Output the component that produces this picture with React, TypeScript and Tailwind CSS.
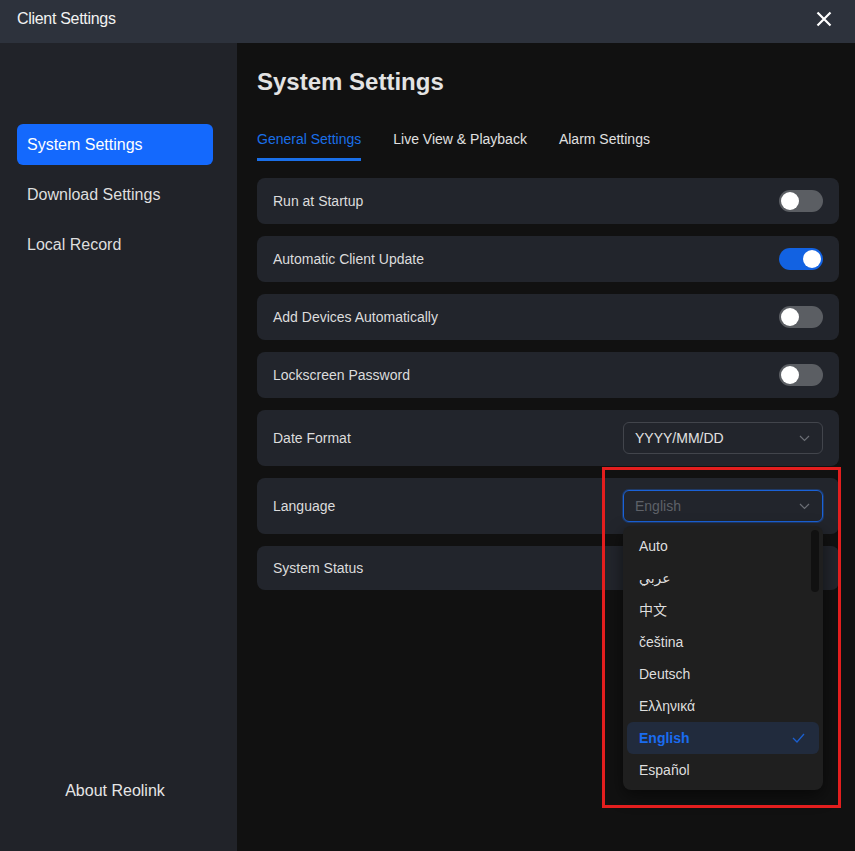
import { useState } from "react"

const font = { fontFamily: '"Liberation Sans", Arial, "Noto Sans CJK SC", "DejaVu Sans", sans-serif' }

function Toggle({ on }: { on: boolean }) {
  return (
    <div
      className={`w-[44px] h-[22px] rounded-full p-[2px] flex items-center ${
        on ? "bg-[#1262e2] justify-end" : "bg-[#5b5e63] justify-start"
      }`}
    >
      <div className="w-[18px] h-[18px] rounded-full bg-white" />
    </div>
  )
}

function Chevron() {
  return (
    <svg width="11" height="7" viewBox="0 0 11 7" fill="none">
      <path d="M1 1l4.5 4.5L10 1" stroke="#6b6e75" strokeWidth="1.2" />
    </svg>
  )
}

const languages = ["Auto", "عربي", "中文", "čeština", "Deutsch", "Ελληνικά", "English", "Español"]

export default function App() {
  const [toggles] = useState([
    { label: "Run at Startup", on: false },
    { label: "Automatic Client Update", on: true },
    { label: "Add Devices Automatically", on: false },
    { label: "Lockscreen Password", on: false },
  ])

  return (
    <div className="w-[855px] h-[851px] flex flex-col bg-[#111111] relative overflow-hidden" style={font}>
      {/* Header */}
      <div className="h-[43px] shrink-0 bg-[#2d323c] flex items-center justify-between pl-[17px] pr-[23px] pb-[5px]">
        <span className="text-[16px] text-[#f2f2f2] tracking-[-0.3px]">Client Settings</span>
        <svg width="16" height="16" viewBox="0 0 16 16" fill="none">
          <path d="M1.5 1.5l13 13M14.5 1.5l-13 13" stroke="#ffffff" strokeWidth="2.2" />
        </svg>
      </div>

      <div className="flex flex-1">
        {/* Sidebar */}
        <aside className="w-[237px] shrink-0 bg-[#212329] flex flex-col justify-between pt-[81px] pb-[50px] pl-[17px] pr-[24px]">
          <div className="flex flex-col gap-[9px]">
            <div className="h-[41px] rounded-[6px] bg-[#1469fd] flex items-center px-[10px] text-[16px] text-white">
              System Settings
            </div>
            <div className="h-[41px] flex items-center px-[10px] text-[16px] text-[#dedede]">Download Settings</div>
            <div className="h-[41px] flex items-center px-[10px] text-[16px] text-[#dedede]">Local Record</div>
          </div>
          <div className="text-center text-[16px] text-[#e6e6e6] h-[22px]">About Reolink</div>
        </aside>

        {/* Main */}
        <main className="flex-1 pl-[20px] pr-[16px] pt-[23px]">
          <h1 className="text-[24px] leading-[32px] font-bold text-[#e3e3e3]">System Settings</h1>

          <div className="flex gap-8 mt-[31px] text-[14px] leading-[20px]">
            <div className="text-[#1a6fe8] pb-[9px] border-b-[3px] border-[#1a6fe8]">General Settings</div>
            <div className="text-[#e0e0e0]">Live View &amp; Playback</div>
            <div className="text-[#e0e0e0]">Alarm Settings</div>
          </div>

          <div className="flex flex-col gap-[12px] mt-[17px] text-[14px] text-[#dcdcdc]">
            {toggles.map((t) => (
              <div key={t.label} className="h-[46px] rounded-[8px] bg-[#22252c] flex items-center justify-between px-4">
                <span>{t.label}</span>
                <Toggle on={t.on} />
              </div>
            ))}

            <div className="h-[56px] rounded-[8px] bg-[#22252c] flex items-center justify-between px-4">
              <span>Date Format</span>
              <div className="w-[200px] h-[32px] rounded-[6px] border border-[#42454c] flex items-center justify-between pl-[11px] pr-[12px] text-[#e2e2e2]">
                <span>YYYY/MM/DD</span>
                <Chevron />
              </div>
            </div>

            <div className="h-[56px] rounded-[8px] bg-[#22252c] flex items-center justify-between px-4 relative z-10">
              <span>Language</span>
              <div className="relative">
                <div className="w-[200px] h-[32px] rounded-[6px] border border-[#1a62d8] shadow-[0_0_0_1px_rgba(26,98,216,0.35)] flex items-center justify-between pl-[11px] pr-[12px] text-[#5e6168]">
                  <span>English</span>
                  <Chevron />
                </div>

                {/* Dropdown */}
                <div className="absolute left-0 top-[36px] w-[200px] rounded-[8px] bg-[#1f1f1f] p-[4px] shadow-[0_6px_16px_rgba(0,0,0,0.5)]">
                  {languages.map((l) => {
                    const sel = l === "English"
                    return (
                      <div
                        key={l}
                        className={`h-[32px] rounded-[6px] flex items-center justify-between pl-[12px] pr-[14px] ${
                          sel ? "bg-[#212b3d] text-[#1a6cf0] font-bold" : "text-[#dedede]"
                        }`}
                      >
                        <span>{l}</span>
                        {sel && (
                          <svg width="13" height="10" viewBox="0 0 13 10" fill="none">
                            <path d="M1 5l4 4 7-8" stroke="#1a5fd0" strokeWidth="1.3" />
                          </svg>
                        )}
                      </div>
                    )
                  })}
                  <div className="absolute right-[4px] top-[4px] w-[8px] h-[62px] rounded-full bg-[#111111]" />
                </div>
              </div>
            </div>

            <div className="h-[44px] rounded-[8px] bg-[#22252c] flex items-center px-4">
              <span>System Status</span>
            </div>
          </div>
        </main>
      </div>

      {/* Red annotation frame */}
      <div className="absolute left-[602px] top-[467px] w-[239px] h-[341px] border-[3px] border-[#e31e1e] pointer-events-none z-20" />
    </div>
  )
}
